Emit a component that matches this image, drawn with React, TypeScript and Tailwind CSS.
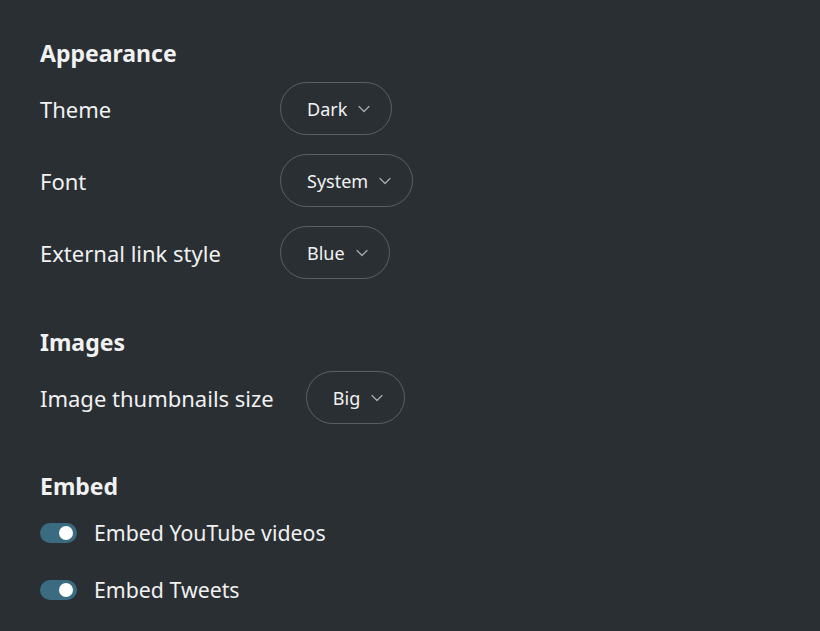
import type { ReactNode } from 'react';

const font = { fontFamily: '"Noto Sans", "Open Sans", sans-serif' };

function Chevron() {
  return (
    <svg width="12" height="8" viewBox="0 0 12 8" fill="none" className="shrink-0">
      <path d="M1 1.5 6 6.5 11 1.5" stroke="#a9adb0" strokeWidth="1.2" strokeLinecap="round" strokeLinejoin="round" />
    </svg>
  );
}

function Select({ value }: { value: string }) {
  return (
    <button className="flex h-[53px] items-center gap-[11px] rounded-full border border-[#5b6064] pl-[26px] pr-[21px] text-[18px] text-[#f2f2f2]">
      <span className="pt-[2px]">{value}</span>
      <Chevron />
    </button>
  );
}

function Row({ label, children }: { label: string; children: ReactNode }) {
  return (
    <div className="flex h-[53px] items-center">
      <span className="mr-[32px] min-w-[208px] pt-[2px] text-[22px]">{label}</span>
      {children}
    </div>
  );
}

function Section({ title, children }: { title: string; children: ReactNode }) {
  return (
    <section className="flex flex-col">
      <h2 className="h-[30px] text-[23px] font-bold leading-[30px]">{title}</h2>
      {children}
    </section>
  );
}

function Toggle({ label }: { label: string }) {
  return (
    <div className="flex h-[30px] items-center gap-[17px]">
      <span className="flex h-[20px] w-[37px] items-center justify-end rounded-full bg-[#3a6b80] pr-[4px]">
        <span className="h-[14px] w-[14px] rounded-full bg-white" />
      </span>
      <span className="text-[21.3px]">{label}</span>
    </div>
  );
}

export default function App() {
  return (
    <div style={font} className="flex min-h-[631px] w-full flex-col bg-[#2a2f33] px-10 pt-[38px] text-[#f1f1f1]">
      <Section title="Appearance">
        <div className="mt-[14px] flex flex-col gap-[19px]">
          <Row label="Theme">
            <Select value="Dark" />
          </Row>
          <Row label="Font">
            <Select value="System" />
          </Row>
          <Row label="External link style">
            <Select value="Blue" />
          </Row>
        </div>
      </Section>
      <div className="mt-[48px]">
        <Section title="Images">
          <div className="mt-[14px]">
            <Row label="Image thumbnails size">
              <Select value="Big" />
            </Row>
          </div>
        </Section>
      </div>
      <div className="mt-[47px]">
        <Section title="Embed">
          <div className="mt-[17px] flex flex-col gap-[27px]">
            <Toggle label="Embed YouTube videos" />
            <Toggle label="Embed Tweets" />
          </div>
        </Section>
      </div>
    </div>
  );
}
